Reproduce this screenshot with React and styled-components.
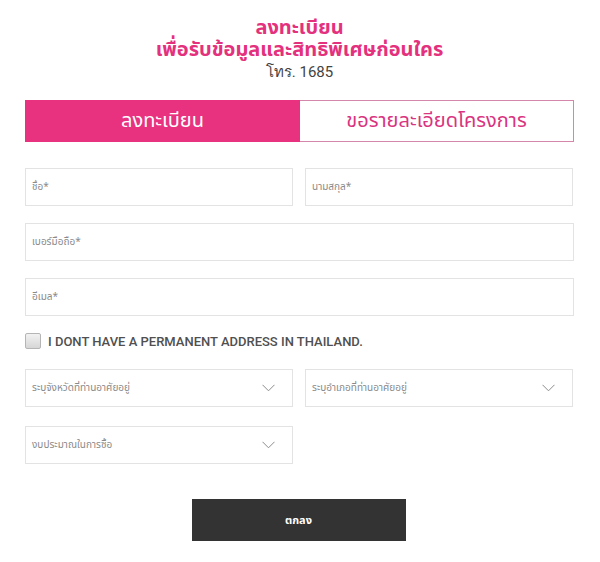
import React from "react";
import styled, { createGlobalStyle } from "styled-components";

const GlobalStyle = createGlobalStyle`
  body {
    margin: 0;
    background: #ffffff;
    font-family: "Noto Sans Thai", "Noto Sans", "DejaVu Sans", sans-serif;
  }
`;

const Page = styled.div`
  width: 600px;
  height: 562px;
  box-sizing: border-box;
  padding: 17px 26px 0 25px;
`;

const Header = styled.div`
  text-align: center;
`;

const Title = styled.div`
  color: #e4317d;
  font-size: 20px;
  font-weight: 700;
  line-height: 22px;
`;

const Phone = styled.div`
  color: #444;
  font-size: 15px;
  line-height: 22px;
  font-family: Roboto, "Noto Sans", sans-serif;
`;

const Tabs = styled.div`
  display: grid;
  grid-template-columns: 275px 1fr;
  height: 42px;
  margin-top: 17px;
`;

const Tab = styled.div`
  display: flex;
  align-items: center;
  justify-content: center;
  font-size: 20px;
  box-sizing: border-box;
  background: ${(props) => (props.active ? "#e8317f" : "#ffffff")};
  color: ${(props) => (props.active ? "#ffffff" : "#d9347f")};
  border: 1px solid ${(props) => (props.active ? "#e8317f" : "#d487ab")};
  border-left: ${(props) => (props.active ? "1px solid #e8317f" : "none")};
`;

const Form = styled.div`
  margin-top: 26px;
  display: flex;
  flex-direction: column;
  gap: 17px;
  width: 549px;
`;

const Row = styled.div`
  display: grid;
  grid-template-columns: ${(props) => (props.single ? "1fr" : "268px 268px")};
  gap: 12px;
  margin-top: ${(props) => (props.push ? "2px" : "0")};
`;

const Field = styled.div`
  height: 38px;
  box-sizing: border-box;
  border: 1px solid #e3e3e3;
  display: flex;
  align-items: center;
  justify-content: space-between;
  padding: 0 17px 0 6px;
  width: ${(props) => (props.half ? "268px" : "auto")};
`;

const Placeholder = styled.span`
  font-size: 10px;
  color: #8a8a8a;
`;

const CheckRow = styled.label`
  display: flex;
  align-items: center;
  gap: 7px;
  height: 18px;
  margin: -1px 0 2px;
`;

const Box = styled.span`
  width: 16px;
  height: 16px;
  box-sizing: border-box;
  border: 1px solid #b5b5b5;
  border-radius: 2px;
  background: linear-gradient(#f2f2f2, #d6d6d6);
`;

const CheckText = styled.span`
  font-family: Roboto, "Liberation Sans", sans-serif;
  font-size: 13px;
  font-weight: 500;
  color: #505050;
`;

const ButtonRow = styled.div`
  display: flex;
  justify-content: center;
  margin-top: 35px;
  padding-right: 2px;
`;

const Submit = styled.button`
  width: 214px;
  height: 42px;
  border: none;
  background: #333333;
  color: #ffffff;
  font-family: inherit;
  font-size: 11px;
  font-weight: 700;
  cursor: pointer;
`;

const Chevron = () => (
  <svg width="13" height="8" viewBox="0 0 13 8" fill="none">
    <path d="M0.5 0.8 L6.5 6.8 L12.5 0.8" stroke="#8c8c8c" strokeWidth="1" />
  </svg>
);

const Select = ({ label, half }) => (
  <Field half={half}>
    <Placeholder>{label}</Placeholder>
    <Chevron />
  </Field>
);

export default function App() {
  return (
    <Page>
      <GlobalStyle />
      <Header>
        <Title>ลงทะเบียน</Title>
        <Title>เพื่อรับข้อมูลและสิทธิพิเศษก่อนใคร</Title>
        <Phone>โทร. 1685</Phone>
      </Header>
      <Tabs>
        <Tab active>ลงทะเบียน</Tab>
        <Tab>ขอรายละเอียดโครงการ</Tab>
      </Tabs>
      <Form>
        <Row>
          <Field>
            <Placeholder>ชื่อ*</Placeholder>
          </Field>
          <Field>
            <Placeholder>นามสกุล*</Placeholder>
          </Field>
        </Row>
        <Row single>
          <Field>
            <Placeholder>เบอร์มือถือ*</Placeholder>
          </Field>
        </Row>
        <Row single>
          <Field>
            <Placeholder>อีเมล*</Placeholder>
          </Field>
        </Row>
        <CheckRow>
          <Box />
          <CheckText>I DONT HAVE A PERMANENT ADDRESS IN THAILAND.</CheckText>
        </CheckRow>
        <Row>
          <Select label="ระบุจังหวัดที่ท่านอาศัยอยู่" />
          <Select label="ระบุอำเภอที่ท่านอาศัยอยู่" />
        </Row>
        <Row single push>
          <Select half label="งบประมาณในการซื้อ" />
        </Row>
      </Form>
      <ButtonRow>
        <Submit>ตกลง</Submit>
      </ButtonRow>
    </Page>
  );
}
